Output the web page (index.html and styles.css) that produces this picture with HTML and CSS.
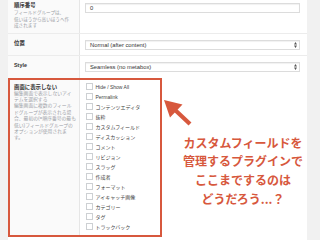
FILE: index.html
```html
<!DOCTYPE html>
<html lang="ja">
<head>
<meta charset="utf-8">
<link rel="stylesheet" href="styles.css">
</head>
<body>
<div class="page">
  <div class="panel">
    <div class="row row-first">
      <div class="label">
        <div class="title">順序番号</div>
        <div class="desc">フィールドグループは、<br>低いほうから高いほうへ作<br>成されます</div>
      </div>
      <div class="field"><div class="input">0</div></div>
    </div>
    <div class="row row-mid">
      <div class="label"><div class="title">位置</div></div>
      <div class="field">
        <div class="select"><span>Normal (after content)</span>
          <svg class="arrows" width="3" height="6" viewBox="0 0 3 6"><path d="M1.5 0 L3 2.4 L0 2.4 Z M1.5 6 L3 3.6 L0 3.6 Z" fill="#555"/></svg>
        </div>
      </div>
    </div>
    <div class="row row-mid row-last">
      <div class="label"><div class="title">Style</div></div>
      <div class="field">
        <div class="select"><span>Seamless (no metabox)</span>
          <svg class="arrows" width="3" height="6" viewBox="0 0 3 6"><path d="M1.5 0 L3 2.4 L0 2.4 Z M1.5 6 L3 3.6 L0 3.6 Z" fill="#555"/></svg>
        </div>
      </div>
    </div>
    <div class="row-red">
      <div class="box">
        <div class="label box-label">
          <div class="title">画面に表示しない</div>
          <div class="desc">編集画面で表示しないアイ<br>テムを選択する<br>編集画面に複数のフィール<br>ドグループが表示される場<br>合、最初の(=順序番号の最も<br>低い)フィールドグループの<br>オプションが使用されま<br>す。</div>
        </div>
        <ul class="checks">
          <li><span class="cb"></span>Hide / Show All</li>
          <li><span class="cb"></span>Permalink</li>
          <li><span class="cb"></span>コンテンツエディタ</li>
          <li><span class="cb"></span>抜粋</li>
          <li><span class="cb"></span>カスタムフィールド</li>
          <li><span class="cb"></span>ディスカッション</li>
          <li><span class="cb"></span>コメント</li>
          <li><span class="cb"></span>リビジョン</li>
          <li><span class="cb"></span>スラッグ</li>
          <li><span class="cb"></span>作成者</li>
          <li><span class="cb"></span>フォーマット</li>
          <li><span class="cb"></span>アイキャッチ画像</li>
          <li><span class="cb"></span>カテゴリー</li>
          <li><span class="cb"></span>タグ</li>
          <li><span class="cb"></span>トラックバック</li>
        </ul>
      </div>
      <div class="note">
        <svg class="arrow" width="32" height="32" viewBox="0 0 32 32">
          <path d="M2 4 L20.5 8.5 L8 21.5 Z" fill="#d7583d"/>
          <path d="M12 13 L28 28" stroke="#d7583d" stroke-width="4.2" stroke-linecap="butt"/>
        </svg>
        <p class="callout">カスタムフィールドを<br>管理するプラグインで<br>ここまでするのは<br>どうだろう...？</p>
      </div>
    </div>
  </div>
</div>
</body>
</html>
```

FILE: styles.css
```css
* { box-sizing: border-box; }
html, body { margin: 0; padding: 0; }
body {
  background: #f1f1f1;
  font-family: "Liberation Sans", "Noto Sans CJK JP", sans-serif;
  color: #333;
  width: 320px;
  height: 240px;
  overflow: hidden;
}
.page {
  padding-left: 8px;
  width: 307px;
}
.panel {
  background: #fff;
  height: 240px;
}
.row {
  display: grid;
  grid-template-columns: 72px 1fr;
}
.row-first { height: 33px; }
.row-mid { border-top: 1px solid #ececec; }
.label {
  background: #fafafa;
  border-right: 1px solid #e6e6e6;
  padding: 1.5px 4px 0 6px;
  white-space: nowrap;
}
.row-mid .label { padding-top: 5.5px; }
.title {
  font-size: 5.4px;
  line-height: 7px;
  font-weight: 700;
  color: #333;
}
.desc {
  font-size: 4.6px;
  line-height: 6.8px;
  color: #9aa0a6;
  margin-top: 1.3px;
}
.field { padding: 3px 7px 0 5px; }
.row-mid .field { padding: 6px 7px 5px 5px; }
.row-last .field { padding-bottom: 6px; }
.input, .select {
  height: 10px;
  border: 1px solid #dcdcdc;
  box-shadow: inset 0 1px 1px rgba(0,0,0,0.06);
  background: #fff;
  font-size: 5.8px;
  line-height: 8px;
  padding-left: 4px;
  color: #333;
}
.select {
  display: flex;
  align-items: center;
  justify-content: space-between;
  padding-right: 2px;
}
.arrows { display: block; }
.row-red {
  display: flex;
}
.box {
  width: 154px;
  height: 159px;
  border: 2px solid #d7583d;
  display: grid;
  grid-template-columns: 70px 1fr;
}
.box-label { padding: 3.5px 2px 0 4px; }
.box-label .desc { margin-top: 0; line-height: 6.4px; font-size: 4.8px; }
.checks {
  list-style: none;
  margin: 0;
  padding: 2px 0 0 6px;
}
.checks li {
  display: flex;
  align-items: center;
  height: 9.95px;
  font-size: 5px;
  color: #444;
  white-space: nowrap;
}
.cb {
  width: 7px;
  height: 7px;
  border: 1px solid #cdd0d3;
  background: #fff;
  margin-right: 2.5px;
  flex: none;
}
.note {
  flex: 1;
  display: flex;
  flex-direction: column;
}
.arrow {
  display: block;
  margin: 18px 0 0 0;
}
.callout {
  margin: 5.5px 0 0 0;
  padding-left: 17px;
  text-align: center;
  font-family: "Noto Sans CJK JP", sans-serif;
  font-weight: 700;
  font-size: 12px;
  line-height: 18.7px;
  color: #d7583d;
  white-space: nowrap;
}
```
